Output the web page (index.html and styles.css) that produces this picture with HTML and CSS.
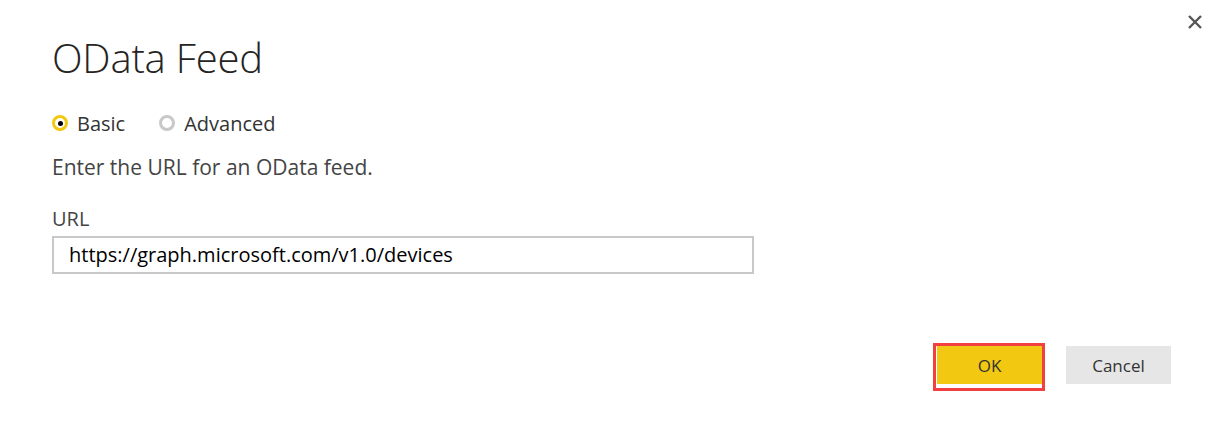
FILE: index.html
```html
<!DOCTYPE html>
<html lang="en">
<head>
<meta charset="utf-8">
<title>OData Feed</title>
<link rel="stylesheet" href="styles.css">
</head>
<body>
<div class="dialog">
  <button class="close" aria-label="Close">
    <svg width="14" height="14" viewBox="0 0 14 14"><path d="M1 1 L13 13 M13 1 L1 13" stroke="#555" stroke-width="2.4" fill="none"/></svg>
  </button>
  <h1 class="title">OData Feed</h1>
  <div class="radios">
    <label class="radio"><span class="dot checked"></span>Basic</label>
    <label class="radio"><span class="dot"></span>Advanced</label>
  </div>
  <p class="desc">Enter the URL for an OData feed.</p>
  <div class="field-label">URL</div>
  <div class="input">https://graph.microsoft.com/v1.0/devices</div>
  <div class="actions">
    <div class="highlight"><button class="btn ok">OK</button></div>
    <button class="btn cancel">Cancel</button>
  </div>
</div>
</body>
</html>
```
FILE: styles.css
```css
html, body {
  margin: 0;
  padding: 0;
  background: #ffffff;
}
body {
  font-family: "Open Sans", "Noto Sans", "Liberation Sans", sans-serif;
  color: #333333;
}
.dialog {
  position: relative;
  width: 1223px;
  height: 436px;
  box-sizing: border-box;
  padding: 32px 52px 0 52px;
}
.close {
  position: absolute;
  top: 15px;
  right: 21px;
  width: 14px;
  height: 14px;
  padding: 0;
  border: 0;
  background: none;
  display: flex;
}
.title {
  margin: 0;
  font-size: 40px;
  font-weight: 300;
  line-height: 52px;
  color: #252423;
  letter-spacing: -0.2px;
}
.radios {
  display: flex;
  gap: 34px;
  margin-top: 26px;
  height: 26px;
  align-items: center;
}
.radio {
  display: flex;
  align-items: center;
  gap: 9px;
  font-size: 20px;
  color: #333;
}
.dot {
  width: 16px;
  height: 16px;
  box-sizing: border-box;
  border-radius: 50%;
  border: 3px solid #c8c8c8;
  display: flex;
  align-items: center;
  justify-content: center;
}
.dot.checked {
  border-color: #f2c811;
}
.dot.checked::after {
  content: "";
  width: 5px;
  height: 5px;
  border-radius: 50%;
  background: #000;
}
.desc {
  margin: 18px 0 0 0;
  font-size: 21px;
  line-height: 26px;
  color: #444;
}
.field-label {
  margin-top: 26px;
  font-size: 20px;
  line-height: 26px;
  color: #444;
}
.input {
  margin-top: 4px;
  width: 702px;
  height: 38px;
  box-sizing: border-box;
  border: 2px solid #c8c8c8;
  padding: 0 0 0 15px;
  font-size: 20px;
  line-height: 34px;
  color: #000;
}
.actions {
  display: flex;
  justify-content: flex-end;
  align-items: flex-start;
  gap: 21px;
  margin-top: 72px;
}
.highlight {
  border: 3px solid #f24040;
  padding: 0 0 4px 1px;
  margin-top: -3px;
  display: flex;
}
.btn {
  width: 105px;
  height: 38px;
  border: 0;
  padding: 0;
  font-family: inherit;
  font-size: 17px;
  color: #333;
}
.ok {
  background: #f2c811;
}
.cancel {
  background: #e6e6e6;
}
```
